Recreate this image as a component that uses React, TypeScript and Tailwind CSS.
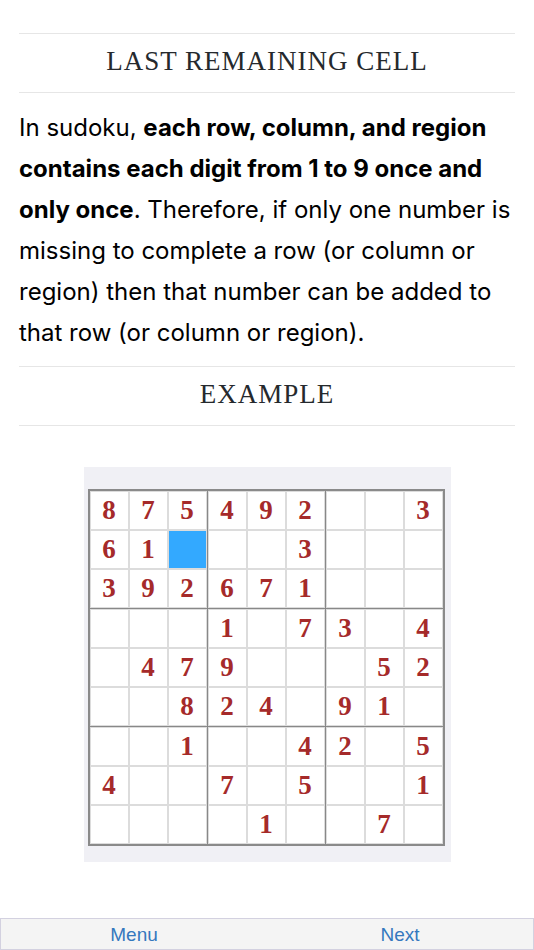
const puzzle: (number | null)[][] = [
  [8, 7, 5, 4, 9, 2, null, null, 3],
  [6, 1, null, null, null, 3, null, null, null],
  [3, 9, 2, 6, 7, 1, null, null, null],
  [null, null, null, 1, null, 7, 3, null, 4],
  [null, 4, 7, 9, null, null, null, 5, 2],
  [null, null, 8, 2, 4, null, 9, 1, null],
  [null, null, 1, null, null, 4, 2, null, 5],
  [4, null, null, 7, null, 5, null, null, 1],
  [null, null, null, null, 1, null, null, 7, null],
];

// highlighted cell (row, col)
const hi = [1, 2];

function Heading({ children }: { children: string }) {
  return (
    <div className="h-[60px] border-y border-[#e6e6e6] flex items-center justify-center">
      <h2 className="text-[27px] tracking-[1px] text-[#25292d] font-['Liberation_Serif',serif] leading-none pb-[3px]">
        {children}
      </h2>
    </div>
  );
}

function Box({ br, bc }: { br: number; bc: number }) {
  const cells = [];
  for (let r = 0; r < 3; r++) {
    for (let c = 0; c < 3; c++) {
      const row = br * 3 + r;
      const col = bc * 3 + c;
      const v = puzzle[row][col];
      const isHi = row === hi[0] && col === hi[1];
      cells.push(
        <div
          key={`${r}-${c}`}
          className={
            isHi
              ? "w-[37px] h-[37px] bg-[#33a9ff]"
              : "w-[37px] h-[37px] bg-white flex items-center justify-center text-[27px] font-bold text-[#a52a2a] font-['Liberation_Serif',serif] leading-none"
          }
        >
          {v ?? ""}
        </div>
      );
    }
  }
  return <div className="grid grid-cols-3 gap-[2px] p-[1px] bg-[#dcdcdc]">{cells}</div>;
}

export default function App() {
  return (
    <div className="h-[950px] flex flex-col bg-white font-['Inter',sans-serif] text-black">
      <div className="px-[19px] pt-[33px]">
        <Heading>LAST REMAINING CELL</Heading>
        <p className="text-[24px] leading-[41px] mt-[14px] mb-[13px]">
          In sudoku, <b>each row, column, and region contains each digit from 1 to 9 once and only once</b>.
          Therefore, if only one number is missing to complete a row (or column or region) then that number can be
          added to that row (or column or region).
        </p>
        <Heading>EXAMPLE</Heading>
      </div>

      <div className="mt-[41px] mx-auto w-[367px] bg-[#f0f0f5] pt-[22px] pl-[4px] pr-[6px] pb-[16px]">
        <div className="grid grid-cols-3 gap-[1px] bg-[#888888] border-2 border-[#8a8a8a]">
          {[0, 1, 2].map((br) => [0, 1, 2].map((bc) => <Box key={`${br}${bc}`} br={br} bc={bc} />))}
        </div>
      </div>

      <div className="mt-auto h-[32px] flex border border-[#d3d1e0] bg-[#f4f4f4] font-['Liberation_Sans',sans-serif] text-[19px] text-[#3478be]">
        <div className="flex-1 flex items-center justify-center pt-[3px]">Menu</div>
        <div className="flex-1 flex items-center justify-center pt-[3px]">Next</div>
      </div>
    </div>
  );
}
